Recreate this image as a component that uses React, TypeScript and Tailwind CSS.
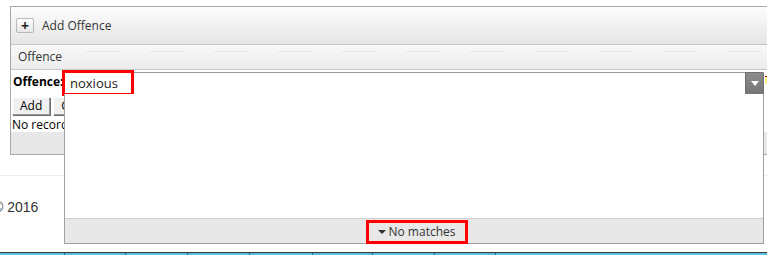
import { useState } from "react";

const ui = { fontFamily: '"Open Sans", "Noto Sans", sans-serif' };
const boot = { fontFamily: '"Liberation Sans", Arial, sans-serif' };

const ComboBox = ({ value }: { value: string }) => {
  const [open] = useState(true);
  return (
    <div className="relative z-10 w-[700px] h-[23px]">
      <div className="flex h-full border border-[#999] bg-white">
        <div className="flex-1 flex items-center pl-[5px] text-[13px] text-[#222]">{value}</div>
        <button
          type="button"
          className="w-[19px] -my-px -mr-px flex items-center justify-center rounded-tr-[3px] border border-[#6f6f6f] bg-gradient-to-b from-[#8d8d8d] to-[#757575]"
          aria-label="Open list"
        >
          <span className="block w-0 h-0 border-l-[4px] border-r-[4px] border-t-[5px] border-l-transparent border-r-transparent border-t-white" />
        </button>
      </div>
      {/* highlight drawn round the typed value */}
      <div className="pointer-events-none absolute -left-[2px] -top-[2px] w-[72px] h-[26px] border-[3px] border-[#ff0000]" />
      <div className="absolute -right-[4px] top-[4px] w-[3px] h-px bg-[#e00]" />
      <div className="absolute -right-[4px] top-[5px] w-[3px] h-[7px] bg-[#fff28a]" />
      {open && (
        <div className="absolute left-0 top-[22px] w-[700px] h-[150px] flex flex-col border border-[#a0a0a0] border-t-0 bg-white">
          <div className="flex-1" />
          <div className="h-[25px] flex items-center justify-center border-t border-[#cfcfcf] bg-[#e8e8e8] pl-[5px]">
            <span className="mt-[2px] inline-flex h-[24px] items-center gap-[3px] border-[3px] border-[#ff0000] px-[9px] text-[12px] text-[#333]">
              <span className="block w-0 h-0 border-l-[4px] border-r-[4px] border-t-[4px] border-l-transparent border-r-transparent border-t-[#333]" />
              No matches
            </span>
          </div>
        </div>
      )}
    </div>
  );
};

const ClassicButton = ({ label }: { label: string }) => (
  <button
    type="button"
    className="h-[18px] px-[7px] text-[12px] leading-none text-black bg-[#f0f0f0] border border-t-white border-l-white border-r-[#9a9a9a] border-b-[#9a9a9a] shadow-[1px_1px_0_#6e6e6e]"
  >
    {label}
  </button>
);

export default function App() {
  return (
    <div className="relative w-[767px] h-[255px] overflow-hidden bg-white text-[#333]" style={ui}>
      <div className="pt-[6px] pl-[10px]">
        <div className="w-[800px] border border-[#a8a8a8]">
          <div className="h-[38px] flex items-center gap-[8px] pl-[5px] bg-gradient-to-b from-[#fdfdfd] to-[#e5e5e5] border-b border-[#c6c6c6]">
            <button
              type="button"
              className="w-[18px] h-[15px] flex items-center justify-center rounded-[2px] border border-[#b8b8b8] bg-gradient-to-b from-white to-[#e6e6e6] text-[14px] font-bold leading-none text-[#222]"
              aria-label="Add"
            >
              +
            </button>
            <span className="text-[12px] text-[#333]">Add Offence</span>
          </div>
          <div className="relative h-[25px] flex items-center pl-[7px] bg-gradient-to-b from-[#f8f8f8] to-[#ececec] border-b border-[#c6c6c6] text-[12px] text-[#333]">
            Offence
            <div className="absolute left-[76px] top-[6px] flex gap-[29px]">
              {Array.from({ length: 11 }).map((_, i) => (
                <span key={i} className="block w-[35px] border-t border-dotted border-[#d9d9d9]" />
              ))}
            </div>
          </div>
          <div className="flex items-start h-[26px] pl-[2px]">
            <span className="w-[51px] mt-[6px] whitespace-nowrap text-[12px] font-bold leading-none text-black">Offence:</span>
            <div className="mt-[2px]">
              <ComboBox value="noxious" />
            </div>
          </div>
          <div className="flex gap-[3px] pl-[1px] pt-px">
            <ClassicButton label="Add" />
            <ClassicButton label="Cancel" />
          </div>
          <div className="h-[17px] pl-[1px] pt-[2px] text-[12px] leading-[15px] text-black">No records found.</div>
          <div className="h-[22px] bg-[#e8e8e8]" />
        </div>
      </div>
      <div className="mt-[20px] border-t border-[#eeeeee]" />
      <div className="pt-[21px] -ml-[7px] text-[14px] leading-[20px] text-[#333]" style={boot}>
        © 2016
      </div>
      <div className="absolute left-0 right-0 bottom-0 h-[3px] border-t border-[#3a3a3a] bg-[#5bc0de] flex">
        {[65, 61, 62, 62, 63, 60, 62, 61].map((w, i) => (
          <span key={i} className="h-full border-r border-[#2d6f84]" style={{ width: w }} />
        ))}
      </div>
    </div>
  );
}
